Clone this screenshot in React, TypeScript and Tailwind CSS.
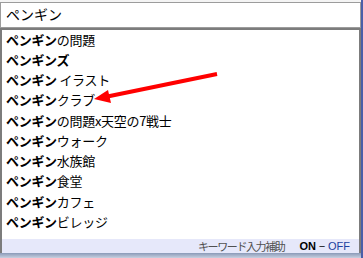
import React from "react";

const items: { bold: string; rest: string }[] = [
	{ bold: "ペンギン", rest: "の問題" },
	{ bold: "ペンギンズ", rest: "" },
	{ bold: "ペンギン", rest: " イラスト" },
	{ bold: "ペンギン", rest: "クラブ" },
	{ bold: "ペンギン", rest: "の問題x天空の7戦士" },
	{ bold: "ペンギン", rest: "ウォーク" },
	{ bold: "ペンギン", rest: "水族館" },
	{ bold: "ペンギン", rest: "食堂" },
	{ bold: "ペンギン", rest: "カフェ" },
	{ bold: "ペンギン", rest: "ビレッジ" },
];

const jp = { fontFamily: '"Noto Sans CJK JP", "Noto Sans", sans-serif' };
const latin = { fontFamily: '"Liberation Sans", sans-serif' };

export default function App() {
	return (
		<div className="relative flex h-[258px] w-[363px] overflow-hidden bg-white" style={jp}>
			<div className="flex w-[361px] flex-col">
				<div className="h-[2px] bg-[#f4f4f4]" />
				<div className="flex h-[26px] items-center border border-[#9c9c9c] bg-white px-[5px] pb-[2px] text-[14px] text-black">
					ペンギン
				</div>
				<div className="flex flex-1 flex-col border-x-[2px] border-t-[2px] border-[#7c7c7c]">
					<div className="flex flex-col">
						{items.map((item, i) => (
							<div
								className="flex h-[20.25px] items-center px-[4px] pb-[2px] text-[13px] tracking-[-0.3px] leading-none text-black"
								key={i}
							>
								<span className="font-bold">{item.bold}</span>
								<span className="whitespace-pre">{item.rest}</span>
							</div>
						))}
					</div>
					<div className="flex-1" />
					<div className="flex h-[14px] items-center justify-end bg-[#e6e8fa] pr-[9px] text-[11px] leading-none">
						<span className="tracking-[-1.4px] text-[#505050]">キーワード入力補助</span>
						<span className="ml-[15px] flex items-center gap-[3px]">
							<span className="font-bold text-black" style={latin}>
								ON
							</span>
							<span className="text-black">−</span>
							<span className="text-[#2040a0]" style={latin}>
								OFF
							</span>
						</span>
					</div>
				</div>
				<div className="h-[5px] bg-gradient-to-b from-[#8a9ab8] to-[#c8d0e0]" />
			</div>
			<div className="w-[2px] bg-[#4a5fa8]" />
			<svg className="pointer-events-none absolute left-0 top-0" height="258" width="363">
				<line stroke="#ff0000" strokeWidth="4" x1="217" x2="105" y1="74" y2="97" />
				<polygon fill="#ff0000" points="94,99 108,90 111,103" />
			</svg>
		</div>
	);
}
